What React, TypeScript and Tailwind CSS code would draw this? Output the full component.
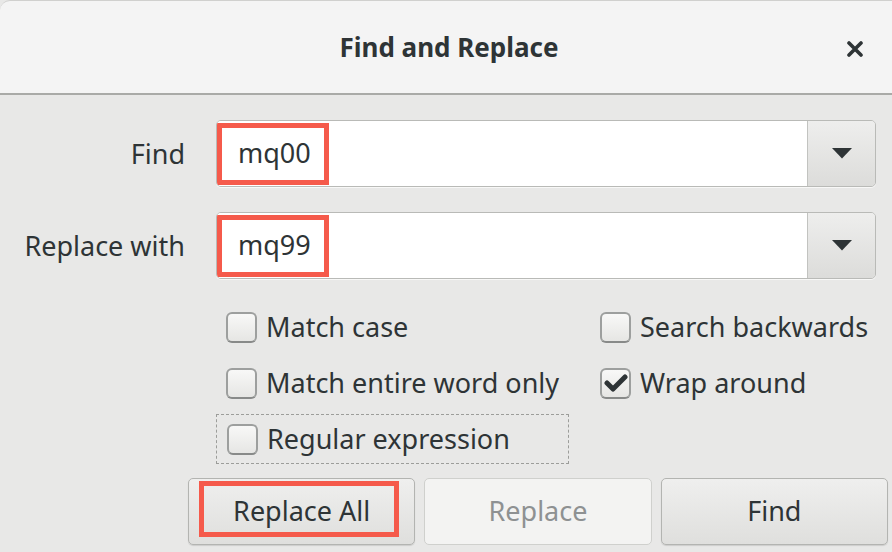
import React from 'react';

const font = { fontFamily: '"Noto Sans", "Open Sans", sans-serif' };

const Arrow = () => (
    <svg width="20" height="11" viewBox="0 0 20 11">
        <path d="M0 0 H20 L10 10.5 Z" fill="#2e3436" />
    </svg>
);

const Field = ({ value }: { value: string }) => (
    <div className="flex h-[67px] rounded-[5px] border border-[#b9bab7] shadow-[0_1px_0_#f8f8f7] overflow-hidden">
        <div className="flex-1 bg-white flex items-center">
            {/* red annotation box round the text */}
            <span className="h-[62px] w-[112px] border-[5px] border-[#f55a4b] flex items-center pl-[16px] text-[#2e3436]">
                {value}
            </span>
        </div>
        <div className="w-[68px] flex items-center justify-center border-l border-[#c2c3c0] bg-gradient-to-b from-[#eeeeed] to-[#dcdcda]">
            <Arrow />
        </div>
    </div>
);

const CheckBox = ({ label, checked = false, focused = false }: { label: string; checked?: boolean; focused?: boolean }) => (
    <div
        className={`h-[50px] flex items-center gap-[9px] pl-[10px] ${focused ? 'w-[353px] border border-dashed border-[#9c9d9a]' : ''}`}
    >
        <span className="w-[31px] h-[31px] rounded-[6px] border-2 border-[#9d9f9e] border-b-[#888a89] bg-gradient-to-b from-[#f8f8f7] to-[#e6e6e4] flex items-center justify-center">
            {checked && (
                <svg width="24" height="20" viewBox="0 0 24 20">
                    <path d="M3 10 L9 16 L21 4" fill="none" stroke="#2e3436" strokeWidth="5" strokeLinecap="round" strokeLinejoin="round" />
                </svg>
            )}
        </span>
        <span className="text-[#2e3436]">{label}</span>
    </div>
);

const App = () => {
    return (
        <div style={font} className="w-[892px] h-[552px] bg-[#e8e8e7] text-[27px] text-[#2e3436] overflow-hidden">
            {/* HEADER START */}
            <div className="relative h-[95px] bg-[#f4f4f4] rounded-tl-[10px] border-t border-[#d0d0ce] border-b-2 border-b-[#a9aaa7] flex items-center justify-center">
                <span className="text-[26px] font-bold pl-[6px]">Find and Replace</span>
                <button className="absolute right-[28px] top-[39px] w-[18px] h-[18px] flex items-center justify-center">
                    <svg width="16" height="16" viewBox="0 0 16 16">
                        <path d="M2 2 L14 14 M14 2 L2 14" stroke="#2e3436" strokeWidth="3.6" strokeLinecap="round" />
                    </svg>
                </button>
            </div>
            {/* HEADER END */}

            {/* FORM START */}
            <div className="grid grid-cols-[185px_1fr] gap-x-[31px] gap-y-[25px] pt-[25px] pr-[16px] items-center">
                <label className="text-right pt-[2px]">Find</label>
                <Field value="mq00" />
                <label className="text-right pt-[2px]">Replace with</label>
                <Field value="mq99" />
            </div>

            <div className="grid grid-cols-[374px_1fr] gap-y-[6px] pl-[216px] mt-[23px]">
                <CheckBox label="Match case" />
                <CheckBox label="Search backwards" />
                <CheckBox label="Match entire word only" />
                <CheckBox label="Wrap around" checked />
                <CheckBox label="Regular expression" focused />
            </div>
            {/* FORM END */}

            {/* BUTTONS START */}
            <div className="flex gap-[9px] pl-[188px] pr-[4px] mt-[14px]">
                <button className="relative flex-1 h-[67px] rounded-[5px] border border-[#b3b4b1] bg-gradient-to-b from-[#efefee] to-[#dfdfdd] shadow-[0_1px_1px_rgba(0,0,0,0.12)]">
                    Replace All
                    <span className="absolute left-[10px] top-[2px] w-[200px] h-[56px] border-[5px] border-[#f55a4b]" />
                </button>
                <button className="flex-1 h-[67px] rounded-[5px] border border-[#cfd0cd] bg-[#f3f3f2] text-[#8e9192]">
                    Replace
                </button>
                <button className="flex-1 h-[67px] rounded-[5px] border border-[#b3b4b1] bg-gradient-to-b from-[#efefee] to-[#dfdfdd] shadow-[0_1px_1px_rgba(0,0,0,0.12)]">
                    Find
                </button>
            </div>
            {/* BUTTONS END */}
        </div>
    );
};

export default App;
